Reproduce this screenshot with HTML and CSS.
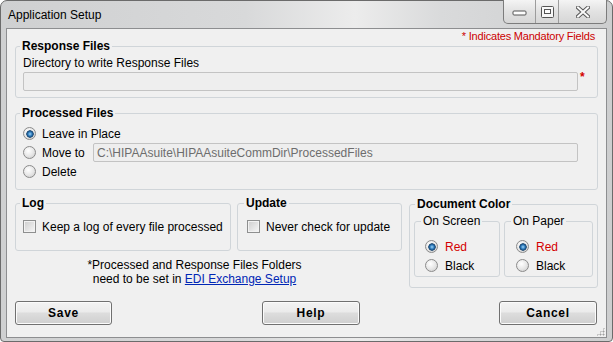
FILE: index.html
```
<!DOCTYPE html>
<html lang="en">
<head>
  <meta charset="UTF-8" />
  <title>Application Setup</title>
  <link rel="stylesheet" href="styles.css">
</head>
<body>

  <div class="window">
    <div class="titlebar">
      <span class="title">Application Setup</span>
      <div class="controls">
        <span class="ctl ctl-min">
          <svg width="15" height="7" viewBox="0 0 15 7"><rect x="1" y="1" width="13" height="4" rx="1" fill="#fdfdfd" stroke="#555" /></svg>
        </span>
        <span class="ctl ctl-max">
          <svg width="13" height="12" viewBox="0 0 13 12"><rect x="0.5" y="0.5" width="12" height="11" rx="1" fill="#f8f8f8" stroke="#555" /><rect x="3.5" y="3.5" width="6" height="4" fill="#fdfdfd" stroke="#555" /></svg>
        </span>
        <span class="ctl ctl-close">
          <svg width="14" height="12" viewBox="0 0 14 12"><path d="M2 1.5 L12 10.5 M12 1.5 L2 10.5" stroke="#5a5a5a" stroke-width="4" stroke-linecap="square" /><path d="M2 1.5 L12 10.5 M12 1.5 L2 10.5" stroke="#fafafa" stroke-width="2" stroke-linecap="square" /></svg>
        </span>
      </div>
    </div>

    <div class="client">
      <div class="mandatory">* Indicates Mandatory Fields</div>

      <fieldset class="group group-response">
        <legend>Response Files</legend>
        <div class="line">Directory to write Response Files</div>
        <div class="field-row">
          <input class="textbox" type="text" readonly>
          <span class="req">*</span>
        </div>
      </fieldset>

      <fieldset class="group group-processed">
        <legend>Processed Files</legend>
        <div class="opt-row">
          <span class="radio on"></span><span>Leave in Place</span>
        </div>
        <div class="opt-row">
          <span class="radio"></span><span class="move-label">Move to</span>
          <input class="textbox path" type="text" readonly value="C:\HIPAAsuite\HIPAAsuiteCommDir\ProcessedFiles">
        </div>
        <div class="opt-row">
          <span class="radio"></span><span>Delete</span>
        </div>
      </fieldset>

      <div class="lower">
        <div class="lower-left">
          <div class="lower-groups">
            <fieldset class="group group-log">
              <legend>Log</legend>
              <div class="check-row"><span class="check"></span><span>Keep a log of every file processed</span></div>
            </fieldset>
            <fieldset class="group group-update">
              <legend>Update</legend>
              <div class="check-row"><span class="check"></span><span>Never check for update</span></div>
            </fieldset>
          </div>
          <div class="note">
            *Processed and Response Files Folders<br>
            need to be set in <a href="#">EDI Exchange Setup</a>
          </div>
        </div>

        <fieldset class="group group-color">
          <legend>Document Color</legend>
          <div class="color-sets">
            <fieldset class="sub sub-screen">
              <legend>On Screen</legend>
              <div class="opt-row"><span class="radio on"></span><span class="red">Red</span></div>
              <div class="opt-row"><span class="radio"></span><span>Black</span></div>
            </fieldset>
            <fieldset class="sub sub-paper">
              <legend>On Paper</legend>
              <div class="opt-row"><span class="radio on"></span><span class="red">Red</span></div>
              <div class="opt-row"><span class="radio"></span><span>Black</span></div>
            </fieldset>
          </div>
        </fieldset>
      </div>

      <div class="buttons">
        <button class="btn btn-save">Save</button>
        <button class="btn btn-help">Help</button>
        <button class="btn btn-cancel">Cancel</button>
      </div>

      <span class="grip"></span>
    </div>
  </div>

</body>
</html>
```

FILE: styles.css
```
body {
  margin: 0;
  background: #fff;
  font-family: "Liberation Sans", Arial, sans-serif;
  font-size: 12px;
  color: #000;
}

.window {
  width: 613px;
  height: 342px;
  box-sizing: border-box;
  border: 1px solid #6b6b6b;
  border-radius: 7px 7px 4px 4px;
  padding: 0 5px 3px 5px;
  display: flex;
  flex-direction: column;
  background: linear-gradient(to right, #cfd0d1 0%, #d8d9da 40%, #ececec 58%, #d9dadb 72%, #cdcecf 100%);
}

.titlebar {
  height: 27px;
  display: flex;
  align-items: center;
}

.title {
  padding: 1px 0 0 2px;
}

.controls {
  align-self: flex-start;
  margin: -1px 0 0 auto;
  height: 24px;
  box-sizing: border-box;
  display: flex;
  border: 1px solid #7c7c7c;
  border-top: none;
  border-radius: 0 0 5px 5px;
  background: linear-gradient(#f4f4f4, #e2e2e2 50%, #d6d6d6);
  overflow: hidden;
}

.ctl {
  display: flex;
  align-items: center;
  justify-content: center;
}

.ctl + .ctl {
  border-left: 1px solid #9c9c9c;
}

.ctl-min { width: 31px; padding-top: 4px; box-sizing: border-box; }
.ctl-max { width: 22px; }
.ctl-close { width: 47px; }

.client {
  flex: 1;
  position: relative;
  border: 1px solid #8d8e90;
  background: #f0f0f0;
  padding: 0 8px;
}

.mandatory {
  height: 10px;
  line-height: 14px;
  text-align: right;
  padding-right: 3px;
  color: #cc0000;
  font-size: 11px;
  letter-spacing: -0.2px;
}

.group, .sub {
  margin: 0;
  min-width: 0;
  border: 1px solid #d0d5d9;
  border-radius: 3px;
}

.group legend, .sub legend {
  padding: 0 2px;
  line-height: 14px;
  margin-left: -3px;
}

.group > legend {
  font-weight: bold;
}

.group-response {
  padding: 3px 0 6px 7px;
}

.line {
  line-height: 14px;
}

.field-row {
  display: flex;
  margin-top: 2px;
}

.textbox {
  flex: 1;
  min-width: 0;
  height: 19px;
  box-sizing: border-box;
  margin: 0;
  padding: 0 3px;
  border: 1px solid #c3c3c3;
  border-radius: 2px;
  background: #eeeeee;
  font-family: "Liberation Sans", Arial, sans-serif;
  font-size: 12px;
  color: #6d6d6d;
  outline: none;
}

.req {
  width: 19px;
  box-sizing: border-box;
  padding-left: 2px;
  color: #d40000;
  font-weight: bold;
  line-height: 10px;
}

.group-processed {
  margin-top: 8px;
  padding: 4px 19px 8px 7px;
}

.opt-row {
  height: 19px;
  display: flex;
  align-items: center;
  gap: 6px;
}

.move-label {
  width: 45px;
  flex: none;
}

.path {
  height: 19px;
}

.radio {
  width: 13px;
  height: 13px;
  flex: none;
  box-sizing: border-box;
  border-radius: 50%;
  border: 1px solid #8b8b8b;
  background: radial-gradient(circle at 40% 35%, #ffffff 0%, #e8e8e8 50%, #c9c9c9 100%);
}

.radio.on {
  background:
    radial-gradient(circle closest-side, #9fd6f8 0%, #2f7cbd 50%, #123f6a 85%, transparent 100%) center / 8px 8px no-repeat,
    radial-gradient(circle at 40% 35%, #ffffff 0%, #e8e8e8 50%, #c9c9c9 100%);
}

.lower {
  display: flex;
  align-items: flex-start;
  gap: 7px;
  margin-top: 6px;
}

.lower-left {
  width: 387px;
}

.lower-groups {
  display: flex;
  gap: 6px;
}

.group-log {
  width: 216px;
  box-sizing: border-box;
  padding: 8px 0 15px 7px;
}

.group-update {
  width: 165px;
  box-sizing: border-box;
  padding: 8px 0 15px 9px;
}

.check-row {
  height: 17px;
  display: flex;
  align-items: center;
  gap: 6px;
}

.check {
  width: 13px;
  height: 13px;
  flex: none;
  box-sizing: border-box;
  border: 1px solid #8e8f8f;
  background: linear-gradient(135deg, #cdcdcd, #f7f7f7);
  box-shadow: inset 0 0 0 1px #f2f2f2;
}

.note {
  margin-top: 7px;
  padding-right: 28px;
  line-height: 14px;
  text-align: center;
}

.note a {
  color: #0026b5;
  text-decoration: underline;
}

.group-color {
  width: 189px;
  box-sizing: border-box;
  margin-top: 1px;
  padding: 3px 4px 10px 4px;
}

.group-color > legend {
  margin-left: 1px;
}

.color-sets {
  display: flex;
  gap: 4px;
}

.sub {
  box-sizing: border-box;
  padding: 9px 0 1px 10px;
}

.sub .opt-row {
  gap: 7px;
}

.sub-screen {
  width: 86px;
}

.sub-screen legend {
  margin-left: -4px;
}

.sub-paper {
  width: 89px;
  padding-left: 11px;
}

.sub-paper legend {
  margin-left: -5px;
}

.red {
  color: #d40000;
}

.buttons {
  display: flex;
  margin-top: 13px;
}

.btn {
  height: 24px;
  margin: 0;
  padding: 0;
  border: 1px solid #707070;
  border-radius: 3px;
  background: linear-gradient(#f3f3f3 0%, #ebebeb 45%, #dddddd 50%, #cfcfcf 100%);
  box-shadow: inset 0 0 0 1px #fbfbfb;
  font-family: "Liberation Sans", Arial, sans-serif;
  font-size: 12px;
  font-weight: bold;
  letter-spacing: 0.7px;
  color: #000;
}

.btn-save { width: 97px; }
.btn-help { width: 98px; margin-left: 150px; }
.btn-cancel { width: 98px; margin-left: auto; margin-right: 1px; }

.grip {
  position: absolute;
  right: 1px;
  bottom: 1px;
  width: 9px;
  height: 9px;
  background: radial-gradient(circle, #a0a0a0 0.8px, transparent 1.2px) 0 0 / 3px 3px;
  clip-path: polygon(100% 0, 100% 100%, 0 100%);
}
```
